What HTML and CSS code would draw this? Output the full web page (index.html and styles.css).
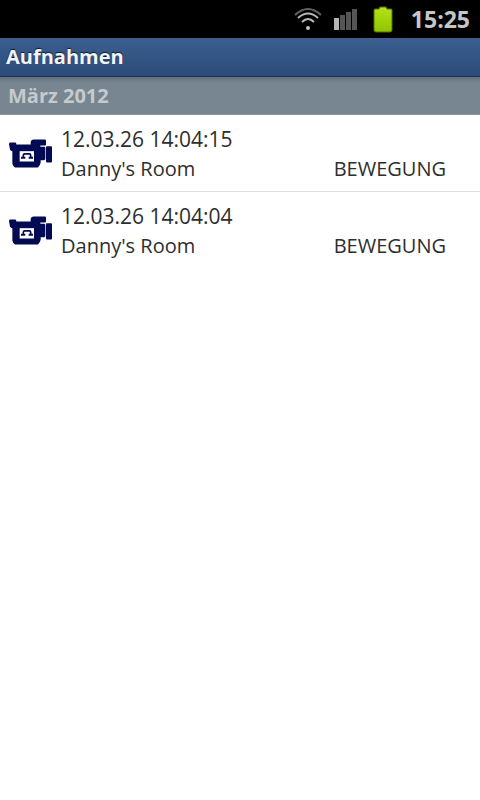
FILE: index.html
```html
<!DOCTYPE html>
<html lang="de">
<head>
<meta charset="utf-8">
<meta name="viewport" content="width=device-width, initial-scale=1">
<title>Aufnahmen</title>
<link rel="stylesheet" href="styles.css">
</head>
<body>
<svg class="defs" aria-hidden="true">
  <symbol id="camera" viewBox="27 26 129 86">
    <path fill="#020b52" d="M30 36h16q3 0 3 6h43v-8q2-7 9-7h34q3 0 3 4v11q0 3-3 3h-14v4h11q4 0 4 4v32q0 4-4 4h-10v8q-2 9-8 14H45q-7-5-8-12V62q-6-1-7-4l-3-17q0-5 3-5z"/>
    <rect fill="#020b52" x="138" y="47" width="18" height="49" rx="3"/>
    <path fill="#fff" d="M59 62h43v31H59z"/>
    <path fill="none" stroke="#020b52" stroke-width="5" d="M70 82v-8q0-4 4-4h14q4 0 4 4v8"/>
    <path fill="#020b52" d="M63 79h13v6H63zM86 79h13v6H86z"/>
  </symbol>
</svg>
<div class="status">
  <svg class="wifi" viewBox="0 0 28 24" aria-label="WLAN">
    <g fill="none" stroke-width="2">
      <path stroke="#626262" d="M1 8Q14-4 27 8"/>
      <path stroke="#b8b8b8" d="M4 11Q14 2 24 11"/>
      <path stroke="#b8b8b8" d="M8 15Q14 9 20 15"/>
    </g>
    <circle cx="14" cy="21" r="2" fill="#c4c4c4"/>
  </svg>
  <svg class="signal" viewBox="0 0 24 24" aria-label="Signal">
    <path fill="#b4b4b4" d="M0 11h5v12H0z"/>
    <path fill="#555" d="M6 8h5v15H6zM12 5h5v18h-5zM18 2h5v21h-5z"/>
  </svg>
  <svg class="battery" viewBox="0 0 22 28" aria-label="Akku">
    <defs><linearGradient id="charge" x2="0" y2="1"><stop stop-color="#b5e218"/><stop offset="1" stop-color="#8fc400"/></linearGradient></defs>
    <path fill="url(#charge)" stroke="#4c7300" d="M3 4h4l1-2h6l1 2h4q1 0 1 1v20q0 2-2 2H4q-2 0-2-2V5q0-1 1-1z"/>
  </svg>
  <time class="clock">15:25</time>
</div>
<header class="title"><h1>Aufnahmen</h1></header>
<main>
  <h2 class="month">März 2012</h2>
  <ul class="list">
    <li class="row">
      <svg class="camera" aria-hidden="true"><use href="#camera"/></svg>
      <div class="info">
        <time class="date">12.03.26 14:04:15</time>
        <div class="detail"><span class="room">Danny's Room</span><span class="event">BEWEGUNG</span></div>
      </div>
    </li>
    <li class="row">
      <svg class="camera" aria-hidden="true"><use href="#camera"/></svg>
      <div class="info">
        <time class="date">12.03.26 14:04:04</time>
        <div class="detail"><span class="room">Danny's Room</span><span class="event">BEWEGUNG</span></div>
      </div>
    </li>
  </ul>
</main>
</body>
</html>
```
FILE: styles.css
```css
* { box-sizing: border-box; }
body {
  margin: 0;
  background: #fff;
  color: #2e2e2e;
  font-family: "Open Sans", "Noto Sans", sans-serif;
}
.defs { position: absolute; width: 0; height: 0; }
.status {
  display: flex;
  align-items: center;
  justify-content: flex-end;
  height: 38px;
  padding-right: 10px;
  background: #000;
}
.wifi { width: 28px; height: 24px; margin-right: 12px; }
.signal { width: 24px; height: 24px; margin-right: 14px; }
.battery { width: 22px; height: 28px; margin-right: 17px; }
.clock { color: #c6c6c6; font-size: 23px; font-weight: 700; line-height: 38px; }
.title {
  height: 39px;
  padding: 0 6px;
  background: linear-gradient(#3b5f90, #2c4b78);
  border-bottom: 1px solid #1e2f4a;
}
h1, h2 { margin: 0; font-size: 20px; font-weight: 700; }
h1 { color: #f2f4f7; line-height: 37px; text-shadow: 0 -1px 1px #0d1a30; }
.month {
  height: 38px;
  padding: 0 8px;
  background: linear-gradient(#66727d, #778690 6px);
  border-bottom: 1px solid #8d989f;
  color: #c6cacc;
  line-height: 37px;
}
.list { margin: 0; padding: 0; list-style: none; }
.row {
  display: flex;
  align-items: center;
  height: 77px;
  padding: 0 34px 0 9px;
  border-bottom: 1px solid #dedede;
}
.row:last-child { border-bottom-color: transparent; }
.camera { flex: none; width: 43px; height: 29px; margin-right: 9px; }
.info { flex: 1; padding-top: 2px; line-height: 29px; }
.date { display: block; font-size: 21px; }
.detail { display: flex; justify-content: space-between; font-size: 20px; }
```
